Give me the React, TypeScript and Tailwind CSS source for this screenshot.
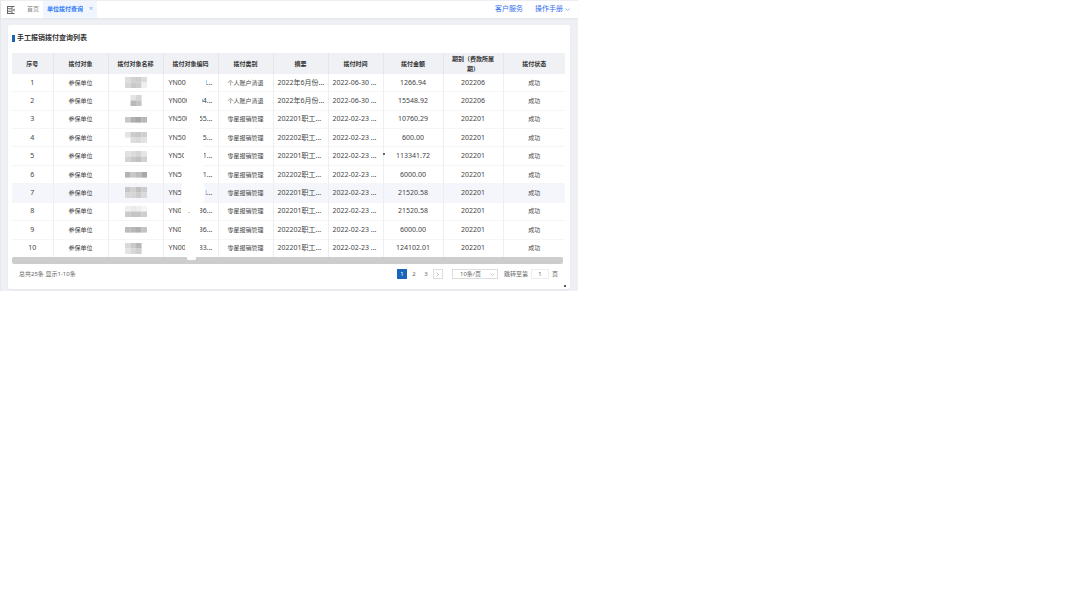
import { useState } from 'react';

interface Payment {
    target: string;
    mosaic: string[][]; // lines of grey blocks covering the name
    prefix: string;
    suffix: string;
    category: string;
    summary: string;
    date: string;
    amount: string;
    period: string;
}

const UNIT = '参保单位';
const REFUND = '个人账户清退';
const MISC = '零星报销管理';

const payments: Payment[] = [
    { target: UNIT, mosaic: [['#dedede', '#d2d2d2', '#cecece', '#dcdcdc'], ['#d6d6d6', '#c8c8c8', '#cdcdcd', '#f0f0f0']], prefix: 'YN00', suffix: 'i...', category: REFUND, summary: '2022年6月份...', date: '2022-06-30 ...', amount: '1266.94', period: '202206' },
    { target: UNIT, mosaic: [['#ffffff', '#e4e4e4', '#d6d6d6', '#ffffff'], ['#ffffff', '#b8b8b8', '#c4c4c4', '#ffffff']], prefix: 'YN000', suffix: '04...', category: REFUND, summary: '2022年6月份...', date: '2022-06-30 ...', amount: '15548.92', period: '202206' },
    { target: UNIT, mosaic: [['#c8c8c8', '#b0b0b0', '#a8a8a8', '#b8b8b8']], prefix: 'YN500', suffix: '55...', category: MISC, summary: '202201职工...', date: '2022-02-23 ...', amount: '10760.29', period: '202201' },
    { target: UNIT, mosaic: [['#e4e4e4', '#cccccc', '#c8c8c8', '#d0d0d0'], ['#ffffff', '#dddddd', '#dadada', '#e2e2e2']], prefix: 'YN50', suffix: '5...', category: MISC, summary: '202202职工...', date: '2022-02-23 ...', amount: '600.00', period: '202201' },
    { target: UNIT, mosaic: [['#e2e2e2', '#dcdcdc', '#d4d4d4', '#e6e6e6'], ['#d4d4d4', '#c8c8c8', '#c0c0c0', '#d0d0d0']], prefix: 'YN500', suffix: '1...', category: MISC, summary: '202201职工...', date: '2022-02-23 ...', amount: '113341.72', period: '202201' },
    { target: UNIT, mosaic: [['#b4b4b4', '#c8c8c8', '#bcbcbc', '#a8a8a8']], prefix: 'YN50', suffix: '1...', category: MISC, summary: '202202职工...', date: '2022-02-23 ...', amount: '6000.00', period: '202201' },
    { target: UNIT, mosaic: [['#c6c6c6', '#d0d0d0', '#c0c0c0', '#cccccc'], ['#d8d8d8', '#d6d6d6', '#cccccc', '#dadada']], prefix: 'YN50', suffix: '3...', category: MISC, summary: '202201职工...', date: '2022-02-23 ...', amount: '21520.58', period: '202201' },
    { target: UNIT, mosaic: [['#f0f0f0', '#eaeaea', '#eeeeee', '#f6f6f6'], ['#cacaca', '#c4c4c4', '#c6c6c6', '#cecece']], prefix: 'YN0', suffix: '36...', category: MISC, summary: '202201职工...', date: '2022-02-23 ...', amount: '21520.58', period: '202201' },
    { target: UNIT, mosaic: [['#bcbcbc', '#b8b8b8', '#b0b0b0', '#c4c4c4']], prefix: 'YN0', suffix: '36...', category: MISC, summary: '202202职工...', date: '2022-02-23 ...', amount: '6000.00', period: '202201' },
    { target: UNIT, mosaic: [['#dadada', '#c8c8c8', '#b8b8b8', '#ffffff'], ['#e4e4e4', '#d8d8d8', '#d0d0d0', '#ffffff']], prefix: 'YN000', suffix: '33...', category: MISC, summary: '202201职工...', date: '2022-02-23 ...', amount: '124102.01', period: '202201' },
];

const headers = ['序号', '拨付对象', '拨付对象名称', '拨付对象编码', '拨付类别', '摘要', '拨付时间', '拨付金额', '期别（费款所属期）', '拨付状态'];

function Mosaic({ blocks }: { blocks: string[][] }) {
    // a single line of blocks sits in the middle
    const top = blocks.length === 1 ? 3 : 0;

    return (
        <svg className="mx-auto block h-[11px] w-[22px]" viewBox="0 0 22 11" aria-hidden="true">
            {blocks.map((line, y) =>
                line.map((fill, x) =>
                    fill === '#ffffff' ? null : <rect key={`${x}-${y}`} x={x * 5.5} y={top + y * 5.5} width="5.6" height="5.6" fill={fill} />
                )
            )}
        </svg>
    );
}

function TopBar() {
    return (
        <header className="flex h-[18px] items-stretch border-t border-[#eceef1] bg-white text-[6px] shadow-xs">
            <button type="button" aria-label="收起菜单" className="ml-[6px] mr-[12px]">
                <svg className="h-[8px] w-[8px]" viewBox="0 0 16 16" fill="none" stroke="#666" strokeWidth="2">
                    <path d="M0 1h15M0 15h15M1 1v14M10 1v14M2 5.500h7M2 10.500h7" />
                    <path d="M15 5v6l-3-3z" fill="#444" stroke="none" />
                </svg>
            </button>
            <nav className="flex">
                <a href="#home" className="flex items-center pr-[4px] text-[#888]">首页</a>
                <a href="#query" className="flex items-center bg-[#f1f5fd] pl-[4px] text-[6px] font-bold text-[#2f7cf6]">单位拨付查询</a>
                <button type="button" aria-label="关闭" className="bg-[#f1f5fd] pl-[6px] pr-[4px] text-[7px] text-[#7fabf5]">×</button>
            </nav>
            <div className="ml-auto mr-[8px] flex items-center gap-[12px] text-[#2f6ef0]">
                <a href="#service" className="text-[7px]">客户服务</a>
                <a href="#manual" className="flex items-center gap-[2px] text-[7px]">
                    操作手册
                    <svg className="h-[5px] w-[5px]" viewBox="0 0 10 10" fill="none" stroke="currentColor" strokeWidth="1">
                        <path d="M1 3l4 4 4-4" />
                    </svg>
                </a>
            </div>
        </header>
    );
}

function PaymentTable() {
    return (
        <div className="relative">
            <table className="h-[205px] w-full table-fixed border-collapse text-center text-[6px] leading-[10px] text-[#444]">
                <colgroup>
                    <col className="w-[41px]" />
                    <col className="w-[55px]" />
                    <col className="w-[55px]" />
                    <col className="w-[55px]" />
                    <col className="w-[55px]" />
                    <col className="w-[55px]" />
                    <col className="w-[55px]" />
                    <col className="w-[60px]" />
                    <col className="w-[60px]" />
                    <col />
                </colgroup>
                <thead>
                    <tr className="h-[21px] bg-[#eff1f5] text-[#333]">
                        {headers.map(header => (
                            <th key={header} className="border-r border-[#e4e6ea] p-0 px-[5px] font-bold last:border-r-0">{header}</th>
                        ))}
                    </tr>
                </thead>
                <tbody>
                    {payments.map((row, index) => (
                        <tr
                            key={index}
                            className={`border-b border-[#f5f6f8] *:border-r *:border-r-[#eceef1] *:p-0 *:last:border-r-0 ${index === 6 ? 'bg-[#f4f6fb]' : ''}`}
                        >
                            <td className="text-[7px]">{index + 1}</td>
                            <td>{row.target}</td>
                            <td><Mosaic blocks={row.mosaic} /></td>
                            <td className="text-[7px]">
                                <span className="flex justify-between px-[5px]">
                                    <span>{row.prefix}</span>
                                    <span>{row.suffix}</span>
                                </span>
                            </td>
                            <td>{row.category}</td>
                            <td className="text-[7px] whitespace-nowrap"><span className="block px-[4px] text-left">{row.summary}</span></td>
                            <td className="text-[7px] whitespace-nowrap"><span className="block px-[4px] text-left">{row.date}</span></td>
                            <td className="text-[7px]">{row.amount}</td>
                            <td className="text-[7px]">{row.period}</td>
                            <td>成功</td>
                        </tr>
                    ))}
                </tbody>
            </table>
            <div className="-mt-[1px] mr-[2px] h-[7px] rounded-[2px] bg-[#cdcdcd]" />
            {/* white smear hiding the middle of the codes */}
            <svg className="pointer-events-none absolute left-0 top-0 h-[212px] w-[553px]" viewBox="0 0 553 212" aria-hidden="true">
                <path
                    fill="#fff"
                    d="M174 24H194V40H190V58H188V76H191V94H192V112H191V130L193 134Q195 141 192 148L188 150V203H184V206Q184 207 182 207H177Q175 207 175 206V203H173V186H169V148L170 130V112H172V94H174V76H175V40H174Z"
                />
                <circle cx="177" cy="159.500" r="0.500" fill="#777" />
                <circle cx="372" cy="101" r="0.900" fill="#222" />
            </svg>
        </div>
    );
}

function Pagination() {
    const [page, setPage] = useState(1);

    return (
        <footer className="mt-[4px] flex h-[12px] items-center pl-[7px] pr-[7px] text-[6px] text-[#666]">
            <span>总共25条 显示1-10条</span>
            <div className="ml-auto flex items-center">
                {[1, 2, 3].map(n => (
                    <button
                        key={n}
                        type="button"
                        onClick={() => setPage(n)}
                        className={`mr-[2px] h-[10px] w-[10px] leading-[10px] ${n === page ? 'bg-[#1764b8] text-white' : ''}`}
                    >
                        {n}
                    </button>
                ))}
                <button type="button" aria-label="下一页" className="flex h-[10px] w-[10px] items-center justify-center border border-[#ddd]">
                    <svg className="h-[5px] w-[5px]" viewBox="0 0 10 10" fill="none" stroke="#aaa" strokeWidth="1.5">
                        <path d="M3 1l4 4-4 4" />
                    </svg>
                </button>
                <div className="relative ml-[9px] mr-[6px]">
                    <select aria-label="每页条数" className="block h-[10px] w-[46px] appearance-none border border-[#ddd] pl-[7px] leading-[8px]">
                        <option>10条/页</option>
                    </select>
                    <svg className="pointer-events-none absolute right-[3px] top-[3px] h-[5px] w-[5px]" viewBox="0 0 10 10" fill="none" stroke="#bbb" strokeWidth="1.5">
                        <path d="M1 3l4 4 4-4" />
                    </svg>
                </div>
                <label htmlFor="jump">跳转至第</label>
                <input id="jump" defaultValue="1" className="mx-[3px] h-[10px] w-[18px] border border-[#eee] text-center" />
                <span>页</span>
            </div>
        </footer>
    );
}

export default function App() {
    return (
        <div className="min-h-screen bg-white">
            <div className="w-full max-w-[578px] border-l border-[#e6e8ec] bg-[#eef0f4] pb-[2px] font-['Noto_Sans','Noto_Sans_CJK_SC',sans-serif]">
                <TopBar />
                <main className="relative ml-[7px] mr-[8px] mt-[7px] rounded-[2px] bg-white pb-[9px] pl-[4px] pr-[5px] pt-[8px] shadow-xs">
                    <h1 className="mb-[9px] flex h-[11px] items-center gap-[2px] text-[7px] font-bold text-[#333]">
                        <span className="h-[7px] w-[3px] bg-[#1764b8]" />
                        手工报销拨付查询列表
                    </h1>
                    <PaymentTable />
                    <Pagination />
                    <span className="absolute bottom-[2px] right-[4px] h-[2px] w-[2px] rounded-full bg-[#222]" />
                </main>
            </div>
        </div>
    );
}
